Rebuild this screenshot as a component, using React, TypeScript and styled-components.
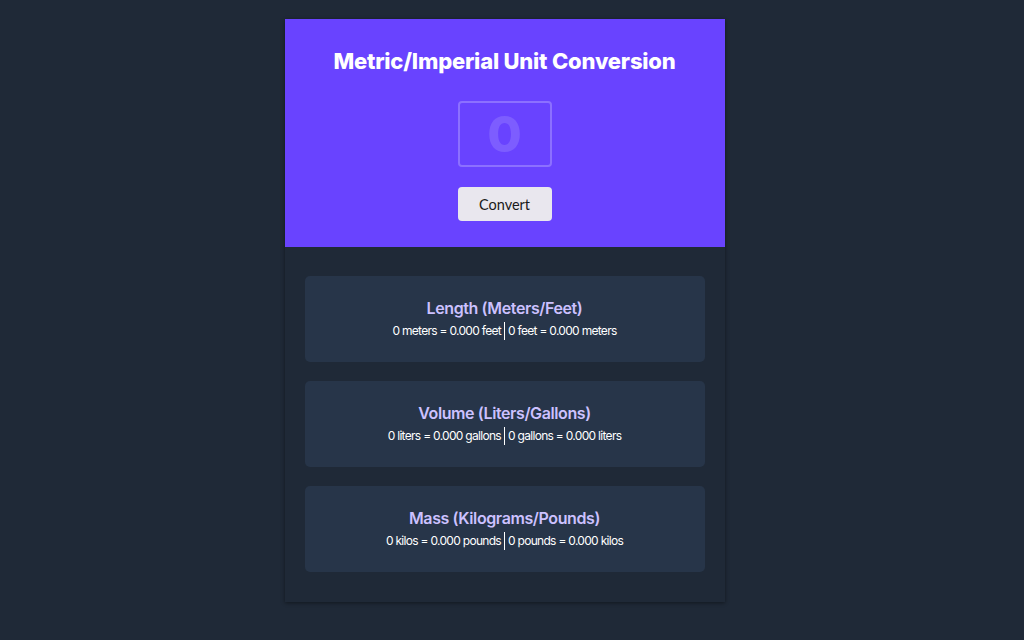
import styled, { createGlobalStyle } from "styled-components";

const GlobalStyle = createGlobalStyle`
  body {
    margin: 0;
    background: #1f2937;
    font-family: Inter, "Noto Sans", sans-serif;
  }
`;

const Page = styled.div`
  display: flex;
  justify-content: center;
  padding: 19px 15px 0 0;
  min-height: 100vh;
  box-sizing: border-box;
`;

const Card = styled.main`
  width: 440px;
  background: #1f2937;
  box-shadow: 0 1px 4px rgba(0, 0, 0, 0.45);
  align-self: flex-start;
`;

const Header = styled.header`
  background: #6943ff;
  height: 228px;
  box-sizing: border-box;
  padding-top: 28px;
  display: flex;
  flex-direction: column;
  align-items: center;
`;

const Title = styled.h1`
  margin: 0;
  color: #ffffff;
  font-size: 22px;
  font-weight: 800;
  line-height: 28px;
  letter-spacing: -0.2px;
`;

const NumberInput = styled.input`
  margin-top: 26px;
  width: 94px;
  height: 66px;
  box-sizing: border-box;
  background: transparent;
  border: 2px solid #8c70ff;
  border-radius: 4px;
  color: #7d5dff;
  font-family: Inter, sans-serif;
  font-size: 50px;
  font-weight: 800;
  text-align: center;
  outline: none;
  padding: 0;
  &::placeholder {
    color: #7d5dff;
  }
`;

const Button = styled.button`
  margin-top: 20px;
  width: 94px;
  height: 34px;
  background: #e9e7ee;
  border: none;
  border-radius: 4px;
  color: #1a1a1a;
  font-family: Lato, sans-serif;
  font-size: 14.5px;
  cursor: pointer;
`;

const Results = styled.section`
  padding: 29px 20px 30px;
  display: flex;
  flex-direction: column;
  gap: 19px;
`;

const ResultCard = styled.div`
  background: #273549;
  border-radius: 5px;
  height: 86px;
  display: flex;
  flex-direction: column;
  align-items: center;
  justify-content: center;
  gap: 4px;
  box-sizing: border-box;
`;

const ResultTitle = styled.h2`
  margin: 0;
  color: #ccc1ff;
  font-size: 16px;
  font-weight: 600;
  line-height: 20px;
  letter-spacing: -0.4px;
`;

const ResultText = styled.p`
  margin: 0;
  display: flex;
  align-items: center;
  gap: 2px;
  color: #ffffff;
  font-size: 12px;
  line-height: 18px;
  letter-spacing: -0.7px;
`;

const Divider = styled.span`
  width: 1px;
  height: 18px;
  background: #ffffff;
  margin: 0 1px;
`;

const conversions = [
  {
    title: "Length (Meters/Feet)",
    metric: "0 meters = 0.000 feet",
    imperial: "0 feet = 0.000 meters",
  },
  {
    title: "Volume (Liters/Gallons)",
    metric: "0 liters = 0.000 gallons",
    imperial: "0 gallons = 0.000 liters",
  },
  {
    title: "Mass (Kilograms/Pounds)",
    metric: "0 kilos = 0.000 pounds",
    imperial: "0 pounds = 0.000 kilos",
  },
];

const App = () => {
  return (
    <>
      <GlobalStyle />
      <Page>
        <Card>
          <Header>
            <Title>Metric/Imperial Unit Conversion</Title>
            <NumberInput type="text" inputMode="numeric" placeholder="0" />
            <Button>Convert</Button>
          </Header>
          <Results>
            {conversions.map((c) => (
              <ResultCard key={c.title}>
                <ResultTitle>{c.title}</ResultTitle>
                <ResultText>
                  <span>{c.metric}</span>
                  <Divider />
                  <span>{c.imperial}</span>
                </ResultText>
              </ResultCard>
            ))}
          </Results>
        </Card>
      </Page>
    </>
  );
};

export default App;
